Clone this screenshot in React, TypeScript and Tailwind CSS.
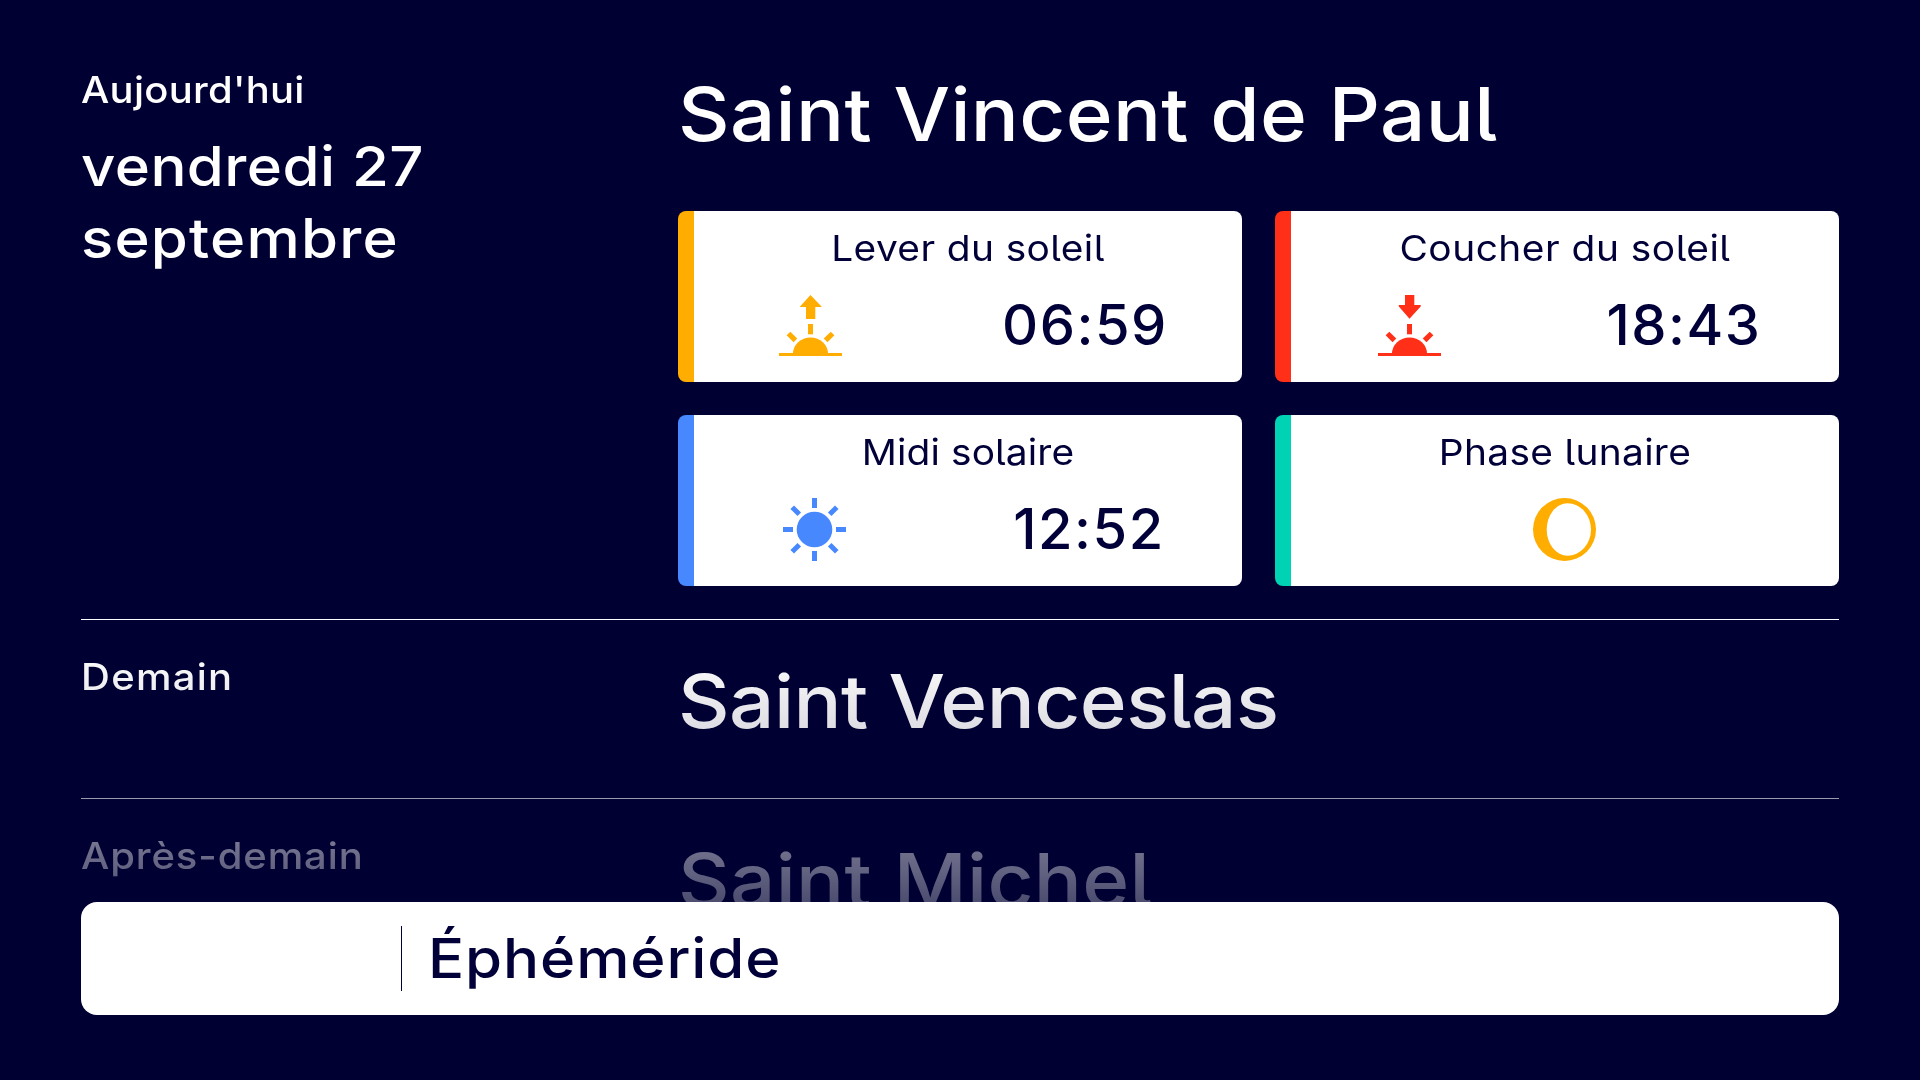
import type { ReactNode } from "react";
import clsx from "clsx";

function HalfSun() {
    return (
        <>
            <rect x="29" y="30" width="5" height="10.3" />
            <rect x="10.4" y="38" width="5.2" height="9.8" transform="rotate(-45 13 43)" />
            <rect x="47.4" y="38" width="5.2" height="9.8" transform="rotate(45 50 43)" />
            <path d="M14 59.5a17.5 16 0 0 1 35 0Z" />
            <rect y="59" width="63" height="3" />
        </>
    );
}

function SunriseIcon() {
    return (
        <svg width="63" height="63" viewBox="0 0 63 63" fill="currentColor">
            <path d="M31.5 1 42.7 12.8V13H36.3V25H27V13H20.8V12.8Z" />
            <HalfSun />
        </svg>
    );
}

function SunsetIcon() {
    return (
        <svg width="63" height="63" viewBox="0 0 63 63" fill="currentColor">
            <path d="M27 1H36.3V11H42.7V12.5L31.5 24.8 20.8 12.5V11H27Z" />
            <HalfSun />
        </svg>
    );
}

function SunIcon() {
    return (
        <svg width="63" height="63" viewBox="0 0 63 63" fill="currentColor">
            <circle cx="31.5" cy="31.5" r="17.8" />
            {[0, 45, 90, 135, 180, 225, 270, 315].map((angle) => (
                <rect key={angle} x="29" width="5" height="10" transform={`rotate(${angle} 31.5 31.5)`} />
            ))}
        </svg>
    );
}

function MoonIcon() {
    return (
        <svg width="63" height="63" viewBox="0 0 63 63" fill="currentColor" fillRule="evenodd">
            <path d="M31.5 0a31.5 31.5 0 1 0 0 63a31.5 31.5 0 1 0 0-63ZM34.5 5.2A23.5 26.3 0 0 1 34.5 57.8A20.8 26.3 0 0 1 34.5 5.2Z" />
        </svg>
    );
}

function InfoCard({
    title,
    titleClass,
    border,
    color,
    icon,
    iconWidth = "flex-1 pr-px",
    time,
}: {
    title: string;
    titleClass: string;
    border: string;
    color: string;
    icon: ReactNode;
    iconWidth?: string;
    time?: string;
}) {
    return (
        <div className={clsx("h-[171px] rounded-lg border-l-16 bg-white pt-[13px] text-[#020038]", border)}>
            <h3
                className={clsx(
                    "scale-x-108 text-center text-[36px] leading-[48px] font-normal whitespace-nowrap",
                    titleClass
                )}
            >
                {title}
            </h3>
            <div className="mt-[17px] flex h-[72px] items-center">
                <div className={clsx("flex justify-center", color, iconWidth)}>{icon}</div>
                {time && (
                    <div className="flex-1 pl-px text-center text-[56px] leading-[71px] font-medium tracking-[1.5px]">
                        {time}
                    </div>
                )}
            </div>
        </div>
    );
}

function DayRow({
    label,
    labelClass,
    saint,
    saintClass,
    date,
    first,
    children,
}: {
    label: string;
    labelClass: string;
    saint: string;
    saintClass: string;
    date?: ReactNode;
    first?: boolean;
    children?: ReactNode;
}) {
    return (
        <section className={clsx("flex", first ? "pt-[34px] pb-[33px]" : "border-t border-white pt-[33px] pb-[49px]")}>
            <div className="w-[597px] shrink-0">
                <p
                    className={clsx(
                        "origin-left scale-x-108 text-[37px] leading-[48px] font-medium whitespace-nowrap",
                        labelClass
                    )}
                >
                    {label}
                </p>
                {date}
            </div>
            <div className="flex-1">
                <h2
                    className={clsx(
                        "origin-left scale-x-108 text-[74px] leading-[96px] font-medium whitespace-nowrap",
                        saintClass
                    )}
                >
                    {saint}
                </h2>
                {children}
            </div>
        </section>
    );
}

export default function App() {
    return (
        <div className="h-screen overflow-hidden bg-[#000033] font-['Inter',sans-serif] text-white [font-feature-settings:'cv05']">
            {/* Days, fading out towards the title bar */}
            <main className="h-[902px] overflow-hidden px-[81px] pt-8 [mask-image:linear-gradient(to_bottom,#000_650px,rgb(0_0_0/0.87)_728px,rgb(0_0_0/0.6)_798px,rgb(0_0_0/0.44)_850px,rgb(0_0_0/0.3)_902px)]">
                <DayRow
                    first
                    label="Aujourd'hui"
                    labelClass="tracking-[0.25px]"
                    saint="Saint Vincent de Paul"
                    saintClass="tracking-[0.27px]"
                    date={
                        <p className="mt-4 origin-left scale-x-108 text-[55.5px] leading-[72px] font-medium">
                            <span className="block tracking-[0.4px]">vendredi 27</span>
                            <span className="block tracking-[1.1px]">septembre</span>
                        </p>
                    }
                >
                    <div className="mt-[49px] grid grid-cols-2 gap-[33px]">
                        <InfoCard
                            title="Lever du soleil"
                            titleClass="tracking-[0.36px]"
                            border="border-[#ffad00]"
                            color="text-[#ffad00]"
                            icon={<SunriseIcon />}
                            iconWidth="w-[233px]"
                            time="06:59"
                        />
                        <InfoCard
                            title="Coucher du soleil"
                            titleClass="tracking-[0.46px]"
                            border="border-[#ff2f18]"
                            color="text-[#ff2f18]"
                            icon={<SunsetIcon />}
                            iconWidth="w-[237px]"
                            time="18:43"
                        />
                        <InfoCard
                            title="Midi solaire"
                            titleClass="tracking-[0.1px]"
                            border="border-[#4788ff]"
                            color="text-[#4788ff]"
                            icon={<SunIcon />}
                            iconWidth="w-[241px]"
                            time="12:52"
                        />
                        <InfoCard
                            title="Phase lunaire"
                            titleClass="tracking-[0.28px]"
                            border="border-[#00d2b4]"
                            color="text-[#ffad00]"
                            icon={<MoonIcon />}
                        />
                    </div>
                </DayRow>
                <DayRow
                    label="Demain"
                    labelClass="tracking-[1.2px]"
                    saint="Saint Venceslas"
                    saintClass="tracking-[-0.5px]"
                />
                <DayRow
                    label="Après-demain"
                    labelClass="tracking-[0.85px]"
                    saint="Saint Michel"
                    saintClass="tracking-[0.3px]"
                />
            </main>

            {/* Title bar */}
            <footer className="mx-[81px] flex h-[113px] items-center rounded-2xl bg-white text-[#020038]">
                <div className="ml-[320px] h-[65px] w-px bg-[#020038]" />
                <h1 className="ml-[26px] origin-left scale-x-108 pb-[2px] text-[55.5px] leading-[72px] font-medium tracking-[0.85px]">
                    Éphéméride
                </h1>
            </footer>
        </div>
    );
}
